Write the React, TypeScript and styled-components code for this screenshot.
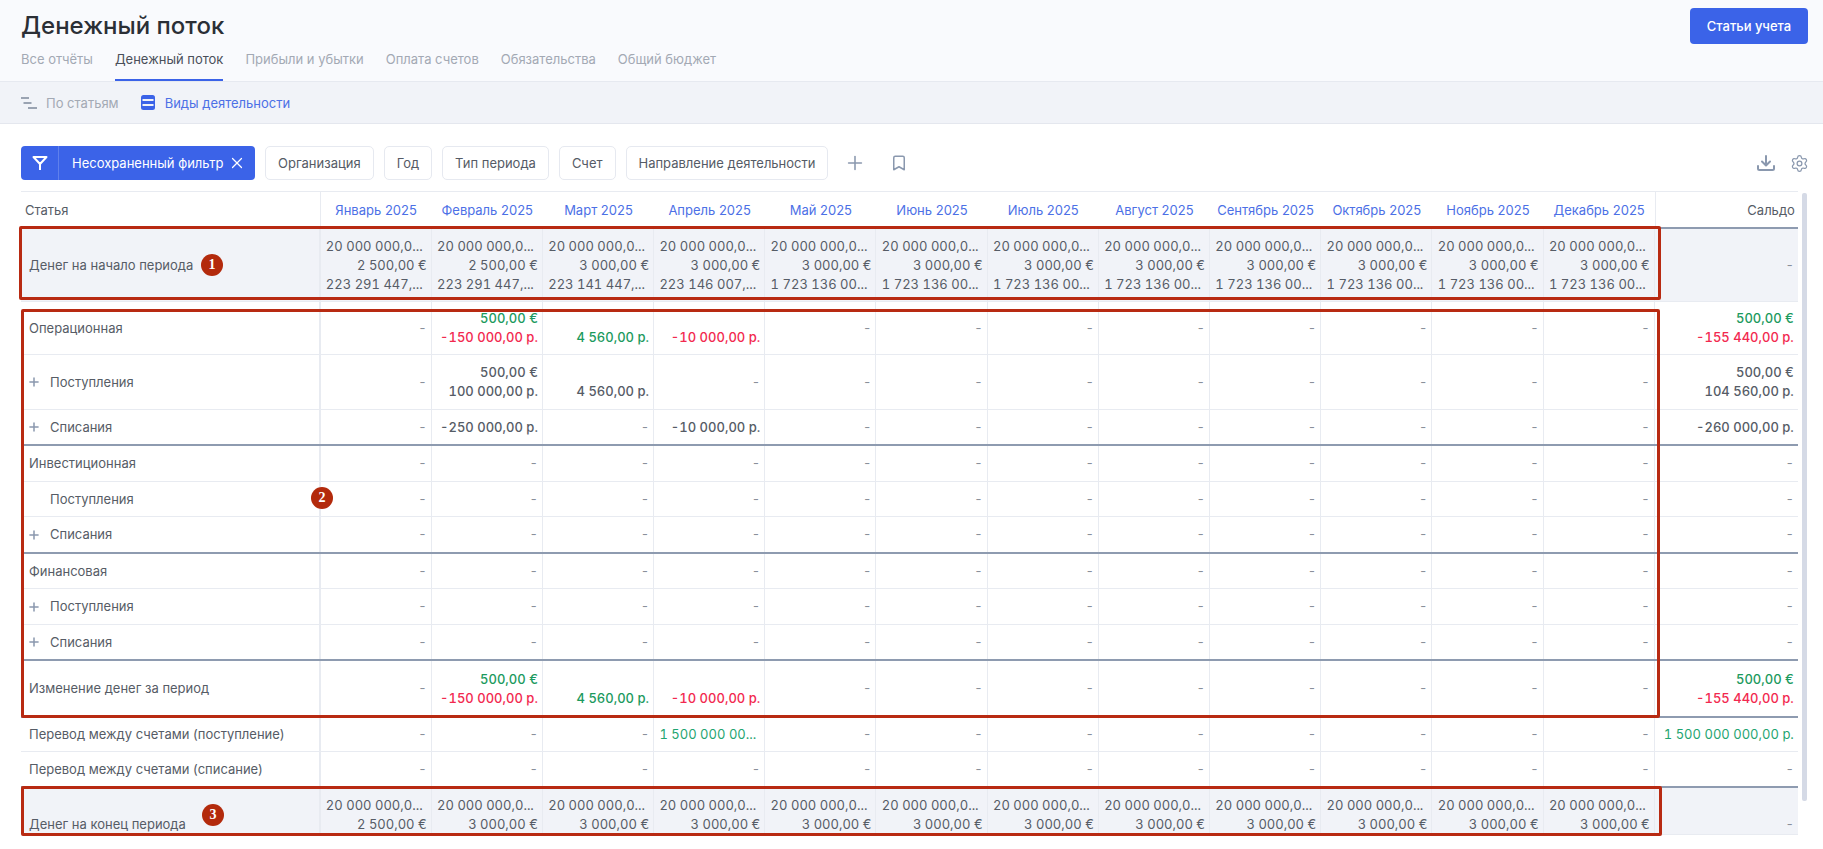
import React from 'react';
import styled, { createGlobalStyle } from 'styled-components';
import { Plus, X, Bookmark, Settings } from 'lucide-react';

const Global = createGlobalStyle`
  html, body { margin: 0; padding: 0; background: #fff; overflow: hidden; }
  body { font-family: Inter, "Noto Sans", sans-serif; color: #4f5560; }
  * { box-sizing: border-box; }
`;

const Page = styled.div`position: relative; width: 1823px; height: 849px; overflow: hidden;`;

const TopBar = styled.header`
  height: 82px; display: flex; justify-content: space-between; align-items: flex-start;
  padding: 0 15px 0 21px; background: #f9fafd; border-bottom: 1px solid #e6e9f0;
`;
const Title = styled.h1`margin: 0; padding-top: 11px; font-size: 24px; line-height: 30px; font-weight: 500; color: #2b2f36;`;
const Tabs = styled.nav`display: flex; gap: 22px; margin-top: 4px;`;
const Tab = styled.div<{ $active?: boolean }>`
  padding: 4px 0 10px; font-size: 13px; line-height: 20px;
  color: ${p => (p.$active ? '#4a4f59' : '#a3a9b4')};
  border-bottom: 2px solid ${p => (p.$active ? '#3b63e8' : 'transparent')};
`;
const PrimaryButton = styled.button`
  margin-top: 8px; width: 118px; height: 36px; border: 0; border-radius: 4px; background: #3b63e8;
  color: #fff; font: 500 13px Inter, sans-serif;
`;

const SubBar = styled.div`
  height: 42px; display: flex; align-items: center; gap: 22px; padding-left: 21px;
  background: #f1f3f8; border-bottom: 1px solid #e4e7ee;
`;
const SubItem = styled.div<{ $active?: boolean }>`
  display: flex; align-items: center; gap: ${p => (p.$active ? 10 : 9)}px; font-size: 13px;
  color: ${p => (p.$active ? '#4c70e6' : '#a3a9b4')};
`;

const FilterRow = styled.div`
  margin-top: 22px; height: 34px; display: flex; align-items: center; gap: 10px; padding: 0 14px 0 21px;
`;
const ActiveFilter = styled.div`
  width: 234px; height: 34px; display: flex; align-items: center; background: #3b63e8; border-radius: 4px;
  color: #fff; font-size: 13px;
`;
const FilterIconBox = styled.span`
  width: 38px; height: 100%; display: flex; align-items: center; justify-content: center;
  border-right: 1px solid #5f80ec;
`;
const FilterLabel = styled.span`padding-left: 13px; margin-right: 4px; white-space: nowrap;`;
const Pill = styled.div`
  height: 34px; display: flex; align-items: center; padding: 0 12px; background: #fff;
  border: 1px solid #e6e9f0; border-radius: 5px; font-size: 13px; color: #555b66; white-space: nowrap;
`;
const AddIcon = styled.span`display: flex; color: #8a98ae; margin-left: 6px;`;
const MarkIcon = styled.span`display: flex; color: #8a98ae; margin-left: 14px;`;
const RightTools = styled.div`margin-left: auto; display: flex; align-items: center; gap: 15px; color: #8a98ae;`;

const TableArea = styled.div`margin: 11px 0 0 21px; display: flex; align-items: flex-start; gap: 4px;`;
const Table = styled.div`width: 1777px; border-top: 1px solid #e8ebf1;`;
const Row = styled.div<{ $h: number; $thick?: boolean; $shade?: boolean }>`
  display: grid; grid-template-columns: 299.5px repeat(12, 111.2px) 143.1px;
  height: ${p => p.$h}px;
  background: ${p => (p.$shade ? '#f1f3f8' : '#fff')};
  border-bottom: ${p => (p.$thick ? '2px solid #8e9bb0' : '1px solid #e8ebf1')};
`;
const Cell = styled.div<{ $bottom?: boolean; $last?: boolean }>`
  min-width: 0; display: flex; flex-direction: column; justify-content: ${p => (p.$bottom ? 'flex-end' : 'center')};
  padding: 0 4px 0 0; border-right: ${p => (p.$last ? '0' : '1px solid #e8ebf1')};
  font-size: 13px; line-height: 19px; text-align: right; font-variant-numeric: tabular-nums;
`;
const Line = styled.div<{ $tone?: string; $strong?: boolean; $clip?: boolean }>`
  height: 19px; white-space: nowrap;
  padding-right: ${p => (p.$clip ? 4 : 0)}px;
  font-weight: ${p => (p.$strong ? 500 : 400)};
  color: ${p =>
    p.$tone === 'g' ? '#1c9a5e' : p.$tone === 't' ? '#1fa571' : p.$tone === 'r' ? '#f2294f' : p.$tone === 'd' ? '#8a909b' : '#565c66'};
`;
const LabelCell = styled.div<{ $bottom?: boolean; $indent?: boolean }>`
  display: flex; align-items: ${p => (p.$bottom ? 'flex-end' : 'center')};
  padding-left: ${p => (p.$indent ? 5.5 : 8)}px; border-right: 2px solid #e8ebf1;
  font-size: 13px; line-height: 19px; color: #565c66;
`;
const Expander = styled.span`width: 23.5px; display: flex; color: #8a98ae;`;
const Spacer = styled.span`width: 23.5px;`;
const HeadLabel = styled.div`
  display: flex; align-items: center; padding-left: 4px; border-right: 1px solid #e8ebf1;
  font-size: 13px; color: #565c66;
`;
const Month = styled.div`
  display: flex; align-items: center; justify-content: center; font-size: 13px; color: #4c70e6; white-space: nowrap;
`;
const SaldoHead = styled.div`
  display: flex; align-items: center; justify-content: flex-end; padding-right: 3px;
  border-left: 1px solid #e8ebf1; font-size: 13px; color: #565c66;
`;
const Scrollbar = styled.div`width: 5px; height: 608px; margin-top: 2px; background: #d5dae6; border-radius: 2px;`;

const Frame = styled.div<{ $l: number; $t: number; $w: number; $h: number }>`
  position: absolute; left: ${p => p.$l}px; top: ${p => p.$t}px; width: ${p => p.$w}px; height: ${p => p.$h}px;
  border: 3px solid #b82a12; border-radius: 2px; pointer-events: none;
`;
const Badge = styled.div<{ $x: number; $y: number }>`
  position: absolute; left: ${p => p.$x - 11}px; top: ${p => p.$y - 11}px; width: 22px; height: 22px; border-radius: 50%;
  background: #b32a0c; color: #fff; display: flex; align-items: center; justify-content: center;
  font: 700 14px "Liberation Serif", serif;
`;

type L = [string, string?];
type V = L[];
const dash: V = [['-', 'd']];
const dashes = (n: number): V[] => Array.from({ length: n }, () => dash);

type RowDef = {
  label: string; h: number; plus?: boolean; indent?: boolean; thick?: boolean; shade?: boolean; bottom?: boolean;
  strong?: boolean; values: V[]; saldo: V;
};

const MONTHS = ['Январь', 'Февраль', 'Март', 'Апрель', 'Май', 'Июнь', 'Июль', 'Август', 'Сентябрь', 'Октябрь', 'Ноябрь', 'Декабрь'];
const M20 = '20 000 000,0...';
const eur = (i: number) => (i < 2 ? '2 500,00 €' : '3 000,00 €');
const third = (i: number) =>
  i < 2 ? '223 291 447,...' : i === 2 ? '223 141 447,...' : i === 3 ? '223 146 007,...' : '1 723 136 00...';

const change: V[] = [
  dash,
  [['500,00 €', 'g'], ['-150 000,00 р.', 'r']],
  [['', ''], ['4 560,00 р.', 'g']],
  [['', ''], ['-10 000,00 р.', 'r']],
  ...dashes(8),
];
const changeSaldo: V = [['500,00 €', 'g'], ['-155 440,00 р.', 'r']];

const ROWS: RowDef[] = [
  {
    label: 'Денег на начало периода', h: 73, shade: true,
    values: MONTHS.map((_, i) => [[M20], [eur(i)], [third(i)]]), saldo: dash,
  },
  { label: 'Операционная', h: 53, strong: true, values: change, saldo: changeSaldo },
  {
    label: 'Поступления', h: 55, plus: true, strong: true,
    values: [dash, [['500,00 €'], ['100 000,00 р.']], [[''], ['4 560,00 р.']], ...dashes(9)],
    saldo: [['500,00 €'], ['104 560,00 р.']],
  },
  {
    label: 'Списания', h: 36, plus: true, thick: true, strong: true,
    values: [dash, [['-250 000,00 р.']], dash, [['-10 000,00 р.']], ...dashes(8)],
    saldo: [['-260 000,00 р.']],
  },
  { label: 'Инвестиционная', h: 36, values: dashes(12), saldo: dash },
  { label: 'Поступления', h: 35, indent: true, values: dashes(12), saldo: dash },
  { label: 'Списания', h: 37, plus: true, thick: true, values: dashes(12), saldo: dash },
  { label: 'Финансовая', h: 35, values: dashes(12), saldo: dash },
  { label: 'Поступления', h: 36, plus: true, values: dashes(12), saldo: dash },
  { label: 'Списания', h: 36, plus: true, thick: true, values: dashes(12), saldo: dash },
  { label: 'Изменение денег за период', h: 57, thick: true, strong: true, values: change, saldo: changeSaldo },
  {
    label: 'Перевод между счетами (поступление)', h: 34,
    values: [...dashes(3), [['1 500 000 00...', 't']], ...dashes(8)],
    saldo: [['1 500 000 000,00 р.', 't']],
  },
  { label: 'Перевод между счетами (списание)', h: 36, thick: true, values: dashes(12), saldo: dash },
  {
    label: 'Денег на конец периода', h: 47, shade: true, bottom: true,
    values: MONTHS.map((_, i) => [[M20], [i === 0 ? '2 500,00 €' : '3 000,00 €']]), saldo: dash,
  },
];

const FunnelIcon = () => (
  <svg width="18" height="18" viewBox="0 0 18 18" fill="none" stroke="#fff" strokeWidth="2" strokeLinejoin="round">
    <path d="M2.5 3h13L9 10 2.5 3Z" />
    <path d="M9 10v6" />
  </svg>
);
const StepsIcon = () => (
  <svg width="16" height="14" viewBox="0 0 16 14" fill="none" stroke="#9aa3b2" strokeWidth="1.8">
    <path d="M0 2h8M2.5 7h8M7 12h9" />
  </svg>
);
const TableIcon = () => (
  <svg width="14" height="15" viewBox="0 0 14 15">
    <rect width="14" height="15" rx="2.5" fill="#3b63e8" />
    <path d="M1.5 5h11M1.5 10h11" stroke="#f1f3f8" strokeWidth="1.8" />
  </svg>
);
const DownloadIcon = () => (
  <svg width="18" height="16" viewBox="0 0 18 16" fill="none" stroke="#8a98ae" strokeWidth="2" strokeLinecap="round" strokeLinejoin="round">
    <path d="M9 1v9M5 6.5 9 10.5l4-4" />
    <path d="M1 11v2.5A1.5 1.5 0 0 0 2.5 15h13a1.5 1.5 0 0 0 1.5-1.5V11" />
  </svg>
);

const renderLines = (v: V, strong?: boolean) =>
  v.map((l, j) => (
    <Line key={j} $tone={l[1]} $strong={strong && l[1] !== 'd'} $clip={l[0].endsWith('...')}>{l[0]}</Line>
  ));

const renderRow = (r: RowDef, idx: number) => (
  <Row key={idx} $h={r.h} $thick={r.thick} $shade={r.shade}>
    <LabelCell $bottom={r.bottom} $indent={r.plus || r.indent}>
      {r.plus && <Expander><Plus size={14} strokeWidth={2.6} /></Expander>}
      {r.indent && <Spacer />}
      {r.label}
    </LabelCell>
    {r.values.map((v, i) => (
      <Cell key={i} $bottom={r.bottom}>{renderLines(v, r.strong)}</Cell>
    ))}
    <Cell $bottom={r.bottom} $last>{renderLines(r.saldo, r.strong)}</Cell>
  </Row>
);

export default function App() {
  return (
    <Page>
      <Global />
      <TopBar>
        <div>
          <Title>Денежный поток</Title>
          <Tabs>
            <Tab>Все отчёты</Tab>
            <Tab $active>Денежный поток</Tab>
            <Tab>Прибыли и убытки</Tab>
            <Tab>Оплата счетов</Tab>
            <Tab>Обязательства</Tab>
            <Tab>Общий бюджет</Tab>
          </Tabs>
        </div>
        <PrimaryButton>Статьи учета</PrimaryButton>
      </TopBar>
      <SubBar>
        <SubItem><StepsIcon />По статьям</SubItem>
        <SubItem $active><TableIcon />Виды деятельности</SubItem>
      </SubBar>
      <FilterRow>
        <ActiveFilter>
          <FilterIconBox><FunnelIcon /></FilterIconBox>
          <FilterLabel>Несохраненный фильтр</FilterLabel>
          <X size={18} strokeWidth={1.6} />
        </ActiveFilter>
        <Pill>Организация</Pill>
        <Pill>Год</Pill>
        <Pill>Тип периода</Pill>
        <Pill>Счет</Pill>
        <Pill>Направление деятельности</Pill>
        <AddIcon><Plus size={22} strokeWidth={1.7} /></AddIcon>
        <MarkIcon><Bookmark size={18} strokeWidth={2} /></MarkIcon>
        <RightTools>
          <DownloadIcon />
          <Settings size={19} strokeWidth={1.6} />
        </RightTools>
      </FilterRow>
      <TableArea>
        <Table>
          <Row $h={37} $thick>
            <HeadLabel>Статья</HeadLabel>
            {MONTHS.map(m => <Month key={m}>{m} 2025</Month>)}
            <SaldoHead>Сальдо</SaldoHead>
          </Row>
          {ROWS.map(renderRow)}
        </Table>
        <Scrollbar />
      </TableArea>
      <Frame $l={19} $t={226} $w={1642} $h={74} />
      <Frame $l={21} $t={309} $w={1639} $h={409} />
      <Frame $l={21} $t={786} $w={1641} $h={50} />
      <Badge $x={212} $y={265}>1</Badge>
      <Badge $x={322} $y={498}>2</Badge>
      <Badge $x={213} $y={815}>3</Badge>
    </Page>
  );
}
